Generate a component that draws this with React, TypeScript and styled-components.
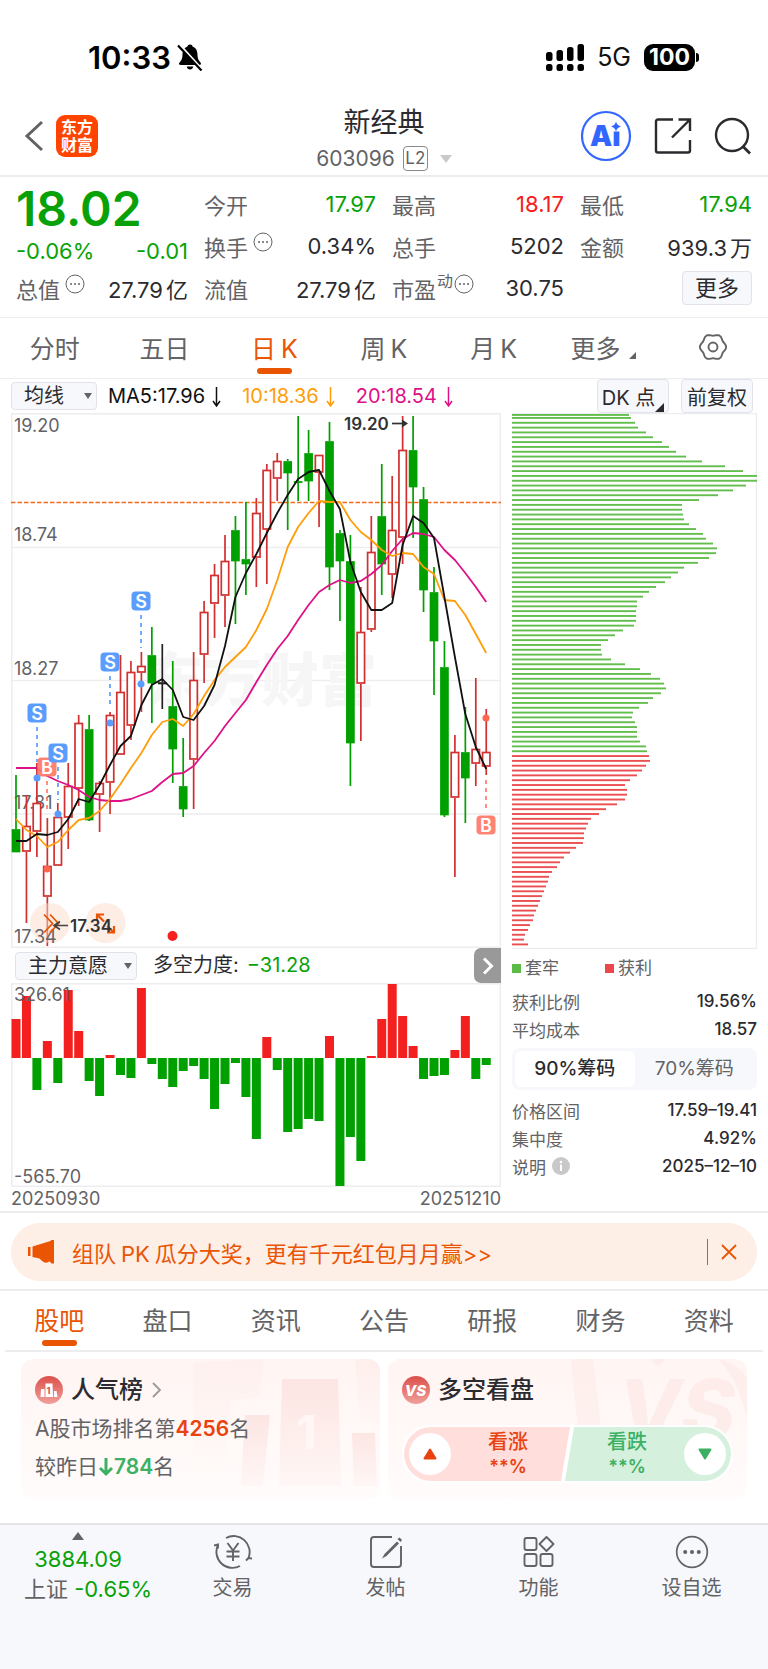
import React, { useState } from "react";
import styled, { createGlobalStyle } from "styled-components";

const color = {
  ink: "#2b2b2f",
  grey: "#636366",
  line: "#ededf0",
  orange: "#ea5504",
  green: "#08a208",
  candleGreen: "#00a000",
  red: "#f42020",
  candleRed: "#d23030",
  soft: "#f7f8fb",
  ma10: "#ff9d0a",
  ma20: "#dd1188",
};

const Global = createGlobalStyle`
  *, *::before, *::after { box-sizing: border-box; }
  body {
    margin: 0;
    background: #fff;
    color: ${color.ink};
    font-family: Inter, "Noto Sans CJK SC", sans-serif;
  }
  button, select { font: inherit; color: inherit; margin: 0; }
  button { padding: 0; border: 0; background: none; cursor: pointer; }
  h1, h2, p, dl, dd { margin: 0; font-weight: 400; }
  svg { display: block; flex: none; }
`;

/* ---------- status bar and title bar ---------- */

const StatusBar = styled.div`
  display: flex;
  align-items: center;
  justify-content: space-between;
  height: 96px;
  padding: 18px 69px 0 88px;
`;
const StatusGroup = styled.div<{ $gap: number }>`
  display: flex;
  align-items: center;
  gap: ${(p) => p.$gap}px;
`;
const Clock = styled.span`
  font-size: 31px;
  font-weight: 600;
  color: #000;
`;
const Network = styled.span`
  font-size: 25px;
  color: #111;
`;
const Battery = styled.span`
  display: flex;
  align-items: center;
  gap: 1px;
  &::after {
    content: "";
    width: 3px;
    height: 9px;
    border-radius: 0 4px 4px 0;
    background: #000;
  }
`;
const BatteryLevel = styled.span`
  width: 51px;
  border-radius: 9px;
  background: #000;
  color: #fff;
  font-size: 23px;
  font-weight: 700;
  line-height: 27px;
  text-align: center;
`;

const TitleBar = styled.header`
  display: grid;
  grid-template-columns: 1fr auto 1fr;
  align-items: center;
  height: 81px;
  padding: 0 16px;
  border-bottom: 2px solid ${color.line};
`;
const TitleLeft = styled.div`
  display: flex;
  align-items: center;
  gap: 12px;
  padding-left: 8px;
`;
const TitleRight = styled.div`
  display: flex;
  align-items: center;
  justify-content: flex-end;
  gap: 22px;
`;
const Brand = styled.button`
  width: 42px;
  height: 42px;
  border-radius: 9px;
  background: #ff4400;
  color: #fff;
  font-size: 16px;
  font-weight: 700;
  line-height: 18px;
`;
const TitleText = styled.div`
  display: flex;
  flex-direction: column;
  align-items: center;
  padding-top: 6px;
`;
const StockName = styled.h1`
  font-size: 27px;
  line-height: 40px;
`;
const StockCode = styled.button`
  display: flex;
  align-items: center;
  gap: 8px;
  color: ${color.grey};
  font-size: 21px;
  line-height: 32px;
`;
const LevelTag = styled.span`
  width: 25px;
  margin-right: 4px;
  border: 1px solid #8a8a8e;
  border-radius: 4px;
  font-size: 17px;
  line-height: 23px;
  text-align: center;
`;
const Triangle = styled.i<{ $size: number; $tone: string; $up?: boolean }>`
  width: 0;
  height: 0;
  border: solid transparent;
  border-width: 0 ${(p) => p.$size}px;
  ${(p) => (p.$up ? "border-bottom" : "border-top")}: ${(p) => p.$size + 2}px solid ${(p) => p.$tone};
`;

/* ---------- quote ---------- */

const Quote = styled.section`
  display: grid;
  grid-template-columns: repeat(4, 1fr);
  column-gap: 16px;
  padding: 6px 16px 8px;
  border-bottom: 1px solid ${color.line};
`;
const QuoteColumn = styled.div``;
const Price = styled.p`
  color: ${color.green};
  font-size: 48px;
  font-weight: 600;
  line-height: 52px;
`;
const Change = styled.p`
  display: flex;
  justify-content: space-between;
  color: ${color.green};
  font-size: 22px;
  line-height: 32px;
`;
const Stat = styled.dl`
  display: flex;
  align-items: center;
  justify-content: space-between;
  height: 42px;
  font-size: 22px;
  white-space: nowrap;
`;
const StatName = styled.dt`
  display: flex;
  align-items: center;
  gap: 5px;
  color: ${color.grey};
  sup { font-size: 16px; line-height: 16px; margin: -14px -4px 0; }
  svg { margin-top: -8px; }
`;
const StatValue = styled.dd<{ $tone?: string }>`
  color: ${(p) => p.$tone ?? color.ink};
`;
const Unit = styled.span`
  margin-left: 3px;
`;
const MoreRow = styled.div`
  display: flex;
  align-items: center;
  justify-content: flex-end;
  height: 42px;
`;
const MoreButton = styled.button`
  width: 70px;
  height: 34px;
  border: 1px solid #e2e3ea;
  border-radius: 4px;
  background: ${color.soft};
  font-size: 22px;
  line-height: 30px;
`;

/* ---------- tabs ---------- */

const Tabs = styled.nav<{ $inset?: boolean }>`
  display: grid;
  grid-template-columns: repeat(7, 1fr);
  height: 61px;
  margin: 0 ${(p) => (p.$inset ? 5 : 0)}px;
  border-bottom: ${(p) => (p.$inset ? 2 : 1)}px solid ${color.line};
`;
const Tab = styled.button<{ $active?: boolean }>`
  position: relative;
  display: flex;
  align-items: center;
  justify-content: center;
  padding-bottom: 3px;
  color: ${(p) => (p.$active ? color.orange : color.grey)};
  font-size: 25px;
  &::after {
    content: "";
    display: ${(p) => (p.$active ? "block" : "none")};
    position: absolute;
    bottom: 4px;
    left: 50%;
    width: 35px;
    height: 6px;
    margin-left: -17px;
    border-radius: 3px;
    background: ${color.orange};
  }
`;
const TabLetter = styled.span`
  margin-left: 5px;
`;
const Latin = styled.span`
  margin: 0 5px;
`;
const Corner = styled.i<{ $size: number; $tone: string }>`
  width: 0;
  height: 0;
  align-self: flex-end;
  border-left: ${(p) => p.$size}px solid transparent;
  border-bottom: ${(p) => p.$size}px solid ${(p) => p.$tone};
`;
const MoreTabCorner = styled(Corner)`
  margin: 0 0 16px 9px;
`;

/* ---------- charts ---------- */

const IndicatorBar = styled.div`
  display: flex;
  align-items: center;
  height: 34px;
  padding: 0 15px 0 11px;
`;
const PickerBox = styled.label`
  position: relative;
  display: flex;
  align-items: center;
`;
const Picker = styled.select<{ $width: number }>`
  appearance: none;
  width: ${(p) => p.$width}px;
  height: 28px;
  padding: 0 0 0 12px;
  border: 1px solid #e2e3ea;
  border-radius: 4px;
  background: ${color.soft};
  font-size: 20px;
  line-height: 26px;
`;
const PickerArrow = styled(Triangle)`
  position: absolute;
  right: 5px;
  pointer-events: none;
`;
const Averages = styled.div`
  display: flex;
  flex: 1;
  gap: 20px;
  padding-left: 11px;
  font-size: 20px;
`;
const Average = styled.span<{ $tone: string }>`
  display: flex;
  align-items: center;
  gap: 6px;
  color: ${(p) => p.$tone};
`;
const ChartButton = styled.button`
  display: flex;
  align-items: center;
  justify-content: center;
  width: 72px;
  height: 34px;
  margin-left: 12px;
  border: 1px solid #e2e3ea;
  border-radius: 4px;
  background: ${color.soft};
  font-size: 20px;
  white-space: nowrap;
`;
const Charts = styled.section`
  display: grid;
  grid-template-columns: 2fr 1fr;
  column-gap: 11px;
  padding: 0 11px;
  border-bottom: 2px solid ${color.line};
`;
const ChartColumn = styled.div`
  min-width: 0;
`;
const Plot = styled.svg`
  width: 100%;
  height: auto;
  font-family: Inter, "Noto Sans CJK SC", sans-serif;
`;
const SubBar = styled.div`
  display: flex;
  align-items: center;
  height: 35px;
  padding-left: 4px;
  font-size: 20px;
`;
const Force = styled.p`
  flex: 1;
  padding-left: 16px;
  line-height: 35px;
  span { margin-left: 8px; color: ${color.green}; }
`;
const NextButton = styled.button`
  display: grid;
  place-items: center;
  width: 27px;
  height: 35px;
  border-radius: 7px 0 0 7px;
  background: #999;
`;
const Dates = styled.p`
  display: flex;
  justify-content: space-between;
  color: ${color.grey};
  font-size: 18px;
  line-height: 24px;
`;
const Legend = styled.p`
  display: flex;
  gap: 46px;
  color: ${color.grey};
  font-size: 17px;
  line-height: 38px;
`;
const LegendItem = styled.span<{ $tone: string }>`
  display: flex;
  align-items: center;
  gap: 4px;
  &::before {
    content: "";
    width: 9px;
    height: 9px;
    background: ${(p) => p.$tone};
  }
`;
const ChipRow = styled.dl`
  display: flex;
  align-items: center;
  justify-content: space-between;
  height: 28px;
  font-size: 17px;
  dt { display: flex; align-items: center; gap: 6px; color: ${color.grey}; }
  dd { font-weight: 500; }
`;
const Segments = styled.div`
  display: flex;
  height: 42px;
  margin: 5px 0 6px;
  padding: 3px;
  border-radius: 8px;
  background: ${color.soft};
`;
const Segment = styled.button<{ $active: boolean }>`
  flex: 1;
  border-radius: 6px;
  background: ${(p) => (p.$active ? "#fff" : "transparent")};
  color: ${(p) => (p.$active ? color.ink : color.grey)};
  font-size: 19px;
  line-height: 34px;
  font-weight: ${(p) => (p.$active ? 500 : 400)};
`;

/* ---------- banner ---------- */

const BannerArea = styled.div`
  padding: 10px 11px 8px;
  border-bottom: 2px solid ${color.line};
`;
const Banner = styled.div`
  display: flex;
  align-items: center;
  height: 58px;
  padding: 0 20px 0 17px;
  border-radius: 29px;
  background: #fdeee6;
  color: ${color.orange};
`;
const BannerLink = styled.a`
  flex: 1;
  margin-left: 18px;
  color: inherit;
  font-size: 22px;
  text-decoration: none;
  white-space: nowrap;
`;
const BannerClose = styled.button`
  display: flex;
  align-items: center;
  height: 26px;
  padding-left: 13px;
  border-left: 1px solid ${color.orange};
`;

/* ---------- cards ---------- */

const Cards = styled.section`
  display: grid;
  grid-template-columns: 1fr 1fr;
  gap: 8px;
  padding: 7px 21px 24px;
`;
const Card = styled.article`
  position: relative;
  overflow: hidden;
  height: 140px;
  padding: 11px 14px;
  border-radius: 12px;
  background: linear-gradient(#fff5f3, #fffcfb);
`;
const CardArt = styled.svg`
  position: absolute;
  top: 0;
  right: 0;
  font-family: Inter, sans-serif;
`;
const CardTitle = styled.h2`
  position: relative;
  display: flex;
  align-items: center;
  gap: 8px;
  font-size: 24px;
  font-weight: 500;
  line-height: 40px;
`;
const RankLine = styled.p`
  position: relative;
  display: flex;
  align-items: center;
  color: ${color.grey};
  font-size: 21px;
  line-height: 38px;
`;
const Strong = styled.b<{ $tone: string }>`
  color: ${(p) => p.$tone};
  font-weight: 600;
`;
const VoteBar = styled.div`
  position: relative;
  display: flex;
  height: 58px;
  margin-top: 15px;
  border: 2px solid #fff;
  border-radius: 29px;
  overflow: hidden;
  background: #fff;
`;
const Vote = styled.button<{ $fall?: boolean }>`
  display: flex;
  flex: 1;
  flex-direction: ${(p) => (p.$fall ? "row-reverse" : "row")};
  align-items: center;
  padding: 0 5px;
  background: ${(p) => (p.$fall ? "#d6f0de" : "#ffdedb")};
  color: ${(p) => (p.$fall ? "#3cb063" : "#e8420f")};
  clip-path: ${(p) =>
    p.$fall ? "polygon(9px 0, 100% 0, 100% 100%, 0 100%)" : "polygon(0 0, 100% 0, calc(100% - 9px) 100%, 0 100%)"};
  margin-left: ${(p) => (p.$fall ? -5 : 0)}px;
`;
const VoteMark = styled.span`
  display: grid;
  place-items: center;
  width: 42px;
  height: 42px;
  border-radius: 50%;
  background: #fff;
`;
const VoteText = styled.span`
  display: flex;
  flex: 1;
  flex-direction: column;
  align-items: center;
  font-size: 20px;
  font-weight: 500;
  line-height: 26px;
  small { font-size: 18px; line-height: 24px; font-weight: 600; }
`;

/* ---------- bottom bar ---------- */

const BottomBar = styled.footer`
  display: grid;
  grid-template-columns: 156fr repeat(4, 153fr);
  align-items: start;
  height: 146px;
  padding-top: 7px;
  border-top: 2px solid #e4e4e9;
  background: ${color.soft};
`;
const BottomItem = styled.button`
  display: flex;
  flex-direction: column;
  align-items: center;
  color: ${color.grey};
  font-size: 20px;
  line-height: 28px;
  svg { margin: 3px 0 5px; }
`;
const IndexItem = styled(BottomItem)`
  font-size: 22px;
  line-height: 30px;
  b { font-weight: 400; color: ${color.green}; }
  i { margin-bottom: 4px; }
`;
const IndexChange = styled.span`
  padding-left: 20px;
`;

/* ---------- data ---------- */

type Kind = "up" | "down" | "flat";
// kind, high, body top, body bottom, low (plot units)
const candles: [Kind, number, number, number, number][] = [
  ["down", 775, 829, 852, 852], ["up", 795, 826, 852, 923], ["up", 763, 803, 832, 857], ["up", 818, 866, 897, 946],
  ["up", 803, 817, 866, 866], ["up", 763, 786, 818, 849], ["up", 715, 723, 789, 806], ["down", 715, 729, 820, 821],
  ["up", 781, 783, 795, 832], ["up", 712, 715, 783, 814], ["up", 655, 692, 755, 755], ["up", 661, 672, 726, 740],
  ["up", 652, 666, 673, 712], ["down", 627, 655, 683, 723], ["flat", 644, 682, 684, 709], ["down", 661, 706, 749, 783],
  ["down", 738, 786, 809, 817], ["up", 652, 680, 760, 809], ["up", 601, 612, 655, 683], ["up", 564, 575, 604, 638],
  ["up", 535, 561, 596, 627], ["down", 516, 530, 561, 624], ["down", 502, 559, 564, 595], ["up", 498, 513, 558, 587],
  ["up", 464, 470, 530, 584], ["up", 453, 461, 479, 501], ["down", 459, 461, 473, 530], ["down", 416, 481, 482, 501],
  ["down", 430, 453, 481, 501], ["up", 455, 455, 473, 527], ["down", 422, 441, 567, 590], ["down", 530, 533, 561, 621],
  ["down", 535, 561, 743, 786], ["up", 587, 632, 684, 741], ["up", 516, 552, 630, 632], ["down", 464, 516, 564, 595],
  ["up", 476, 530, 575, 598], ["up", 416, 450, 538, 564], ["down", 416, 450, 487, 538], ["down", 487, 499, 590, 612],
  ["down", 567, 592, 641, 695], ["down", 641, 667, 815, 817], ["up", 735, 752, 798, 877], ["down", 707, 752, 778, 823],
  ["up", 678, 749, 764, 786], ["up", 709, 752, 767, 775],
];
const ma5 = [841, 841, 834, 835, 832, 819, 799, 802, 785, 765, 746, 736, 705, 685, 679, 690, 717, 720, 706, 685, 646, 597, 573, 554, 533, 513, 495, 479, 472, 470, 491, 509, 562, 592, 610, 610, 603, 545, 516, 523, 538, 597, 657, 714, 747, 769];
const ma10 = [819, 830, 836, 847, 842, 830, 820, 818, 811, 799, 784, 768, 753, 735, 722, 719, 726, 714, 696, 680, 667, 657, 647, 630, 609, 580, 547, 527, 513, 501, 502, 502, 520, 532, 540, 550, 556, 553, 554, 567, 574, 600, 601, 615, 634, 653];
const ma20 = [768, 768, 768, 776, 781, 785, 790, 797, 800, 801, 801, 799, 795, 791, 782, 774, 773, 766, 753, 741, 726, 713, 700, 682, 665, 649, 636, 620, 605, 592, 585, 580, 583, 581, 574, 565, 551, 539, 533, 534, 537, 550, 560, 573, 587, 602];
const force = [39, 62, -32, 17, -25, 68, 27, -23, -38, 3, -17, -20, 70, -6, -21, -29, -13, -8, -21, -51, -26, -5, -39, -81, 21, -12, -74, -71, -61, -63, 22, -128, -79, -103, 2, 39, 74, 42, 12, -21, -18, -17, 8, 42, -21, -7];
const trapped = [117, 119, 123, 126, 134, 141, 150, 157, 164, 174, 190, 213, 231, 245, 245, 234, 221, 206, 187, 170, 170, 171, 172, 177, 184, 191, 194, 201, 205, 204, 197, 186, 172, 166, 159, 153, 144, 137, 131, 125, 125, 124, 124, 124, 122, 111, 103, 96, 89, 89, 90, 99, 113, 128, 139, 148, 152, 154, 149, 141, 136, 127, 121, 120, 123, 125, 125, 125, 128, 134, 135];
const profit = [137, 138, 134, 130, 125, 118, 113, 115, 115, 113, 105, 94, 87, 79, 76, 74, 72, 72, 71, 64, 58, 52, 48, 45, 40, 37, 36, 34, 32, 30, 28, 26, 24, 22, 21, 18, 16, 13, 12, 16];

const xOf = (i: number) => 16 + i * 10.45;
const toLine = (ys: number[]) => ys.map((y, i) => `${xOf(i).toFixed(1)},${y}`).join(" ");
const candleTone: Record<Kind, string> = { up: color.candleRed, down: color.candleGreen, flat: "#222" };

function CandleChart() {
  const sells = [
    { x: 37, y: 713, from: 727, to: 762, dot: 778 },
    { x: 58, y: 753, from: 767, to: 800, dot: 814 },
    { x: 110, y: 662, from: 676, to: 708, dot: 723 },
    { x: 141, y: 601, from: 615, to: 648, dot: 684 },
  ];
  const buys = [
    { x: 47, y: 767, from: 781, to: 813, dot: 869 },
    { x: 486, y: 825, from: 780, to: 812, dot: 718 },
  ];
  return (
    <Plot viewBox="11 413 490 535" role="img" aria-label="日K">
      <g stroke={color.line} strokeWidth="1.500" fill="none">
        <rect x="11.800" y="413.800" width="488.500" height="533.500" />
        <path d="M11 547.500H501M11 680.500H501M11 814H501" />
      </g>
      <text x="145" y="701" fontSize="58" fontWeight="900" fill="#f6f6f7">东方财富</text>
      <path d="M11 502.500H501" stroke="#f26a1b" strokeWidth="1.500" strokeDasharray="4.500 2" />
      <g fontSize="18" fill={color.grey}>
        <text x="14" y="432">19.20</text>
        <text x="14" y="541">18.74</text>
        <text x="14" y="675">18.27</text>
        <text x="14" y="809">17.81</text>
      </g>
      {candles.map(([kind, high, top, bottom, low], i) => (
        <g key={i} stroke={candleTone[kind]} strokeWidth="1.700">
          <path d={`M${xOf(i)} ${high}V${top}M${xOf(i)} ${bottom}V${low}`} />
          <rect
            x={xOf(i) - (kind === "up" ? 3.7 : 3.5)}
            y={top + (kind === "up" ? 0.5 : 1)}
            width={kind === "up" ? 7.4 : 7}
            height={Math.max(bottom - top - 1.5, 0.1)}
            fill={kind === "down" ? color.candleGreen : kind === "up" ? "#fff" : "#222"}
          />
        </g>
      ))}
      <g fill="none" strokeWidth="1.800" strokeLinejoin="round">
        <polyline points={toLine(ma20)} stroke={color.ma20} />
        <polyline points={toLine(ma10)} stroke={color.ma10} />
        <polyline points={toLine(ma5)} stroke="#111" />
      </g>
      <g fontSize="18" textAnchor="middle" fontWeight="600">
        {buys.map((m) => (
          <g key={m.x}>
            <path d={`M${m.x} ${m.from}V${m.to}`} stroke="#ff7b6b" strokeWidth="1.700" strokeDasharray="4 4" />
            <circle cx={m.x} cy={m.dot} r="3.500" fill="#ff6650" />
            <rect x={m.x - 9.5} y={m.y - 9.5} width="19" height="19" rx="4" fill="#ff7b6b" opacity=".95" />
            <text x={m.x} y={m.y + 6.5} fill="#fff">B</text>
          </g>
        ))}
        {sells.map((m) => (
          <g key={m.x}>
            <path d={`M${m.x} ${m.from}V${m.to}`} stroke="#5a9dff" strokeWidth="1.700" strokeDasharray="4 4" />
            <circle cx={m.x} cy={m.dot} r="3.500" fill="#5a9dff" />
            <rect x={m.x - 9.5} y={m.y - 9.5} width="19" height="19" rx="4" fill="#5a9dff" />
            <text x={m.x} y={m.y + 6.5} fill="#fff">S</text>
          </g>
        ))}
      </g>
      <text x="344" y="430" fontSize="17" fontWeight="600" fill="#333">19.20</text>
      <path d="M392 423.500H406" stroke="#333" strokeWidth="1.700" />
      <path d="M402 419.500L408 423.500L402 427.500Z" fill="#333" />
      <circle cx="50" cy="923" r="20" fill="#fcdccb" opacity=".5" />
      <circle cx="105.500" cy="923" r="20" fill="#fcdccb" opacity=".5" />
      <text x="14" y="943" fontSize="18" fill={color.grey}>17.34</text>
      <g fill="none" stroke={color.orange} strokeWidth="1.800">
        <path d="M44 914.500L52.500 923.500L44 932.500M50 914.500L58.500 923.500L50 932.500" />
        <path d="M97 921V914.500H104M97 914.500L104 921.500" strokeWidth="2.200" />
        <path d="M107 932.500H114V926M114 932.500L107 926" strokeWidth="2.200" />
      </g>
      <path d="M55 925.500H68M60 921.500L54 925.500L60 929.500" stroke="#444" strokeWidth="1.700" fill="none" />
      <text x="70" y="932" fontSize="17" fontWeight="600" fill="#333">17.34</text>
      <circle cx="172.500" cy="936" r="5" fill={color.red} />
    </Plot>
  );
}

function ForceChart() {
  return (
    <Plot viewBox="11 983 490 204" role="img" aria-label="多空力度">
      <rect x="11.800" y="983.800" width="488.500" height="202.500" fill="none" stroke={color.line} strokeWidth="1.500" />
      {force.map((v, i) => (
        <rect
          key={i}
          x={xOf(i) - 4.5}
          y={v > 0 ? 1058 - v : 1058}
          width="9"
          height={Math.abs(v)}
          fill={v > 0 ? color.red : color.candleGreen}
        />
      ))}
      <g fontSize="18" fill={color.grey}>
        <text x="14" y="1001">326.61</text>
        <text x="14" y="1183">-565.70</text>
      </g>
    </Plot>
  );
}

function ChipChart() {
  const bars = [...trapped, ...profit];
  return (
    <Plot viewBox="512 413 245 536" role="img" aria-label="筹码分布">
      <path d="M512 413.500H756.500V948.500H512" fill="none" stroke={color.line} strokeWidth="1.500" />
      {bars.map((w, i) => (
        <rect
          key={i}
          x="512"
          y={i === 0 ? 414 : 417 + (i - 1) * 4.83}
          width={w}
          height="1.900"
          fill={i < trapped.length ? "#63be4e" : "#ec4f52"}
        />
      ))}
    </Plot>
  );
}

/* ---------- icons ---------- */

const Dots = ({ size, r }: { size: number; r: number }) => (
  <svg width={size} height={size} viewBox="0 0 20 20" fill="none" stroke="currentColor" strokeWidth="1">
    <circle cx="10" cy="10" r="9" />
    <g fill="currentColor" stroke="none">
      <circle cx="6" cy="10" r={r} />
      <circle cx="10" cy="10" r={r} />
      <circle cx="14" cy="10" r={r} />
    </g>
  </svg>
);

const MutedBell = () => (
  <svg width="26" height="28" viewBox="0 0 26 28">
    <path d="M13 1.500a2.800 2.800 0 0 1 2.800 2.300c3.500 1.200 4.600 4.200 4.700 8.200.1 4 1.200 5.600 3 7.400.9 1 .5 2.600-1.300 2.600H3.800c-1.800 0-2.200-1.600-1.300-2.600 1.800-1.800 2.900-3.400 3-7.400.1-4 1.200-7 4.700-8.200A2.800 2.800 0 0 1 13 1.500ZM9.800 23.500h6.400c-.2 1.900-1.500 3-3.200 3s-3-1.100-3.200-3Z" />
    <path d="M3 2L26 27.500" stroke="#fff" strokeWidth="2.400" />
    <path d="M1 2.500L24.500 27.500" stroke="#000" strokeWidth="2.200" />
  </svg>
);

const Signal = () => (
  <svg width="38" height="27" viewBox="0 0 38 27">
    {[8, 6, 3, 0].map((top, i) => (
      <g key={i}>
        <rect x={i * 10.5} y={top} width="6.500" height={17 - top} rx="2.500" />
        <rect x={i * 10.5} y="20" width="6.500" height="7" rx="2.500" />
      </g>
    ))}
  </svg>
);

const gearOutline = Array.from({ length: 72 }, (_, i) => {
  const a = (i * Math.PI) / 36;
  const r = 12.2 + 0.9 * Math.cos(6 * a);
  return `${(15 + r * Math.cos(a)).toFixed(2)},${(15 + r * Math.sin(a)).toFixed(2)}`;
}).join(" ");

const Gear = () => (
  <svg width="30" height="30" viewBox="0 0 30 30" fill="none" stroke="currentColor" strokeWidth="1.900">
    <polygon points={gearOutline} strokeLinejoin="round" />
    <circle cx="15" cy="15" r="4.500" />
  </svg>
);

const DownArrow = () => (
  <svg width="11" height="21" viewBox="0 0 11 21" fill="none" stroke="currentColor" strokeWidth="1.500">
    <path d="M5.500 1V20M2 15L5.500 20L9 15" />
  </svg>
);

export default function App() {
  const [range, setRange] = useState(90);
  const chartTabs = ["分时", "五日", "日K", "周K", "月K"];
  const infoTabs = ["股吧", "盘口", "资讯", "公告", "研报", "财务", "资料"];

  return (
    <>
      <Global />
      <StatusBar>
        <StatusGroup $gap={6}>
          <Clock>10:33</Clock>
          <MutedBell />
        </StatusGroup>
        <StatusGroup $gap={13}>
          <Signal />
          <Network>5G</Network>
          <Battery>
            <BatteryLevel>100</BatteryLevel>
          </Battery>
        </StatusGroup>
      </StatusBar>

      <TitleBar>
        <TitleLeft>
          <button aria-label="返回">
            <svg width="20" height="32" viewBox="0 0 20 32" fill="none" stroke={color.grey} strokeWidth="3">
              <path d="M18 2L3 16L18 30" />
            </svg>
          </button>
          <Brand>东方<br />财富</Brand>
        </TitleLeft>
        <TitleText>
          <StockName>新经典</StockName>
          <StockCode>
            603096
            <LevelTag>L2</LevelTag>
            <Triangle $size={6} $tone="#c9c9cc" />
          </StockCode>
        </TitleText>
        <TitleRight>
          <button aria-label="Ai">
            <svg width="52" height="52" viewBox="0 0 52 52">
              <circle cx="26" cy="26" r="24" fill="none" stroke="#3366ff" strokeWidth="2.200" />
              <text x="10" y="36" fontSize="28" fontWeight="900" fontFamily="Inter" fill="#3366ff">Ai</text>
              <path d="M29 11H42V21.500H29Z" fill="#fff" />
              <path d="M36 11.500Q37 15.500 41 16.500Q37 17.500 36 21.500Q35 17.500 31 16.500Q35 15.500 36 11.500Z" fill="#3366ff" />
            </svg>
          </button>
          <button aria-label="分享">
            <svg width="38" height="38" viewBox="0 0 38 38" fill="none" stroke={color.ink} strokeWidth="2.400">
              <path d="M19 2.500H4Q2 2.500 2 4.500V33.500Q2 35.500 4 35.500H34Q36 35.500 36 33.500V23" />
              <path d="M24.500 2.500H36V14M36 2.500L18 20.500" />
            </svg>
          </button>
          <button aria-label="搜索">
            <svg width="38" height="38" viewBox="0 0 38 38" fill="none" stroke={color.ink} strokeWidth="2.400">
              <circle cx="18" cy="18" r="16" />
              <path d="M28.500 29L36 36.500" strokeWidth="2.800" />
            </svg>
          </button>
        </TitleRight>
      </TitleBar>

      <Quote>
        <QuoteColumn>
          <Price>18.02</Price>
          <Change>
            <span>-0.06%</span>
            <span>-0.01</span>
          </Change>
          <Stat>
            <StatName>总值<Dots size={20} r={1} /></StatName>
            <StatValue>27.79<Unit>亿</Unit></StatValue>
          </Stat>
        </QuoteColumn>
        <QuoteColumn>
          <Stat><StatName>今开</StatName><StatValue $tone={color.green}>17.97</StatValue></Stat>
          <Stat><StatName>换手<Dots size={20} r={1} /></StatName><StatValue>0.34%</StatValue></Stat>
          <Stat><StatName>流值</StatName><StatValue>27.79<Unit>亿</Unit></StatValue></Stat>
        </QuoteColumn>
        <QuoteColumn>
          <Stat><StatName>最高</StatName><StatValue $tone={color.red}>18.17</StatValue></Stat>
          <Stat><StatName>总手</StatName><StatValue>5202</StatValue></Stat>
          <Stat><StatName>市盈<sup>动</sup><Dots size={20} r={1} /></StatName><StatValue>30.75</StatValue></Stat>
        </QuoteColumn>
        <QuoteColumn>
          <Stat><StatName>最低</StatName><StatValue $tone={color.green}>17.94</StatValue></Stat>
          <Stat><StatName>金额</StatName><StatValue>939.3<Unit>万</Unit></StatValue></Stat>
          <MoreRow><MoreButton>更多</MoreButton></MoreRow>
        </QuoteColumn>
      </Quote>

      <Tabs>
        {chartTabs.map((name) => (
          <Tab key={name} $active={name === "日K"}>
            <span>{name.endsWith("K") ? <>{name[0]}<TabLetter>K</TabLetter></> : name}</span>
          </Tab>
        ))}
        <Tab>更多<MoreTabCorner $size={7} $tone={color.grey} /></Tab>
        <Tab aria-label="设置"><Gear /></Tab>
      </Tabs>

      <IndicatorBar>
        <PickerBox>
          <Picker $width={86} aria-label="均线" defaultValue="均线"><option>均线</option></Picker>
          <PickerArrow $size={4} $tone={color.grey} />
        </PickerBox>
        <Averages>
          <Average $tone="#111">MA5:17.96<DownArrow /></Average>
          <Average $tone={color.ma10}>10:18.36<DownArrow /></Average>
          <Average $tone={color.ma20}>20:18.54<DownArrow /></Average>
        </Averages>
        <ChartButton>DK 点<Corner $size={9} $tone={color.ink} /></ChartButton>
        <ChartButton>前复权</ChartButton>
      </IndicatorBar>

      <Charts>
        <ChartColumn>
          <CandleChart />
          <SubBar>
            <PickerBox>
              <Picker $width={122} aria-label="主力意愿" defaultValue="主力意愿"><option>主力意愿</option></Picker>
              <PickerArrow $size={4} $tone={color.grey} />
            </PickerBox>
            <Force>多空力度:<span>−31.28</span></Force>
            <NextButton aria-label="下一个">
              <svg width="12" height="20" viewBox="0 0 12 20" fill="none" stroke="#fff" strokeWidth="3">
                <path d="M2 2.500L9.500 10L2 17.500" />
              </svg>
            </NextButton>
          </SubBar>
          <ForceChart />
          <Dates><span>20250930</span><span>20251210</span></Dates>
        </ChartColumn>
        <ChartColumn>
          <ChipChart />
          <Legend>
            <LegendItem $tone="#5cbb46">套牢</LegendItem>
            <LegendItem $tone="#ec474b">获利</LegendItem>
          </Legend>
          <ChipRow><dt>获利比例</dt><dd>19.56%</dd></ChipRow>
          <ChipRow><dt>平均成本</dt><dd>18.57</dd></ChipRow>
          <Segments>
            {[90, 70].map((n) => (
              <Segment key={n} $active={range === n} onClick={() => setRange(n)}>{n}%筹码</Segment>
            ))}
          </Segments>
          <ChipRow><dt>价格区间</dt><dd>17.59–19.41</dd></ChipRow>
          <ChipRow><dt>集中度</dt><dd>4.92%</dd></ChipRow>
          <ChipRow>
            <dt>
              说明
              <svg width="18" height="18" viewBox="0 0 18 18">
                <circle cx="9" cy="9" r="9" fill="#c8c8ca" />
                <circle cx="9" cy="5" r="1.300" fill="#fff" />
                <path d="M9 7.500V14" stroke="#fff" strokeWidth="2" />
              </svg>
            </dt>
            <dd>2025–12–10</dd>
          </ChipRow>
        </ChartColumn>
      </Charts>

      <BannerArea>
        <Banner>
          <svg width="26" height="24" viewBox="0 0 26 24" fill="currentColor">
            <path d="M0 7H2.500V16H0ZM4.500 6.500L22.500 1Q22.500 0 24 0H26V23.500H24Q22.500 23.500 22.500 22L21 21.500Q18 24.500 13.500 20.500L11.500 18.500L4.500 17Z" />
          </svg>
          <BannerLink href="#pk">组队<Latin>PK</Latin>瓜分大奖，更有千元红包月月赢&gt;&gt;</BannerLink>
          <BannerClose aria-label="关闭">
            <svg width="16" height="16" viewBox="0 0 16 16" fill="none" stroke="currentColor" strokeWidth="1.800">
              <path d="M1 1L15 15M15 1L1 15" />
            </svg>
          </BannerClose>
        </Banner>
      </BannerArea>

      <Tabs $inset>
        {infoTabs.map((name, i) => (
          <Tab key={name} $active={i === 0}>{name}</Tab>
        ))}
      </Tabs>

      <Cards>
        <Card>
          <CardArt width="359" height="140" viewBox="0 0 359 140">
            <defs>
              <linearGradient id="fade" x1="0" y1="0" x2="0" y2="1">
                <stop offset="0" stopColor="#fbdedb" stopOpacity=".7" />
                <stop offset="1" stopColor="#fbdedb" stopOpacity=".15" />
              </linearGradient>
            </defs>
            <g fill="url(#fade)">
              <path d="M172 4L243 0L238 38L210 42L203 112H172Z" opacity=".3" />
              <path d="M334 0H359V64H339Z" opacity=".4" />
              <path d="M261 20H317L320 127H258Z" />
              <path d="M224 56H249L242 127H220Z" />
              <path d="M331 74H354L356 127H333Z" />
            </g>
            <text x="275" y="90" fontSize="47" fontWeight="800" fill="#fff6f5">1</text>
          </CardArt>
          <CardTitle>
            <svg width="28" height="28" viewBox="0 0 28 28">
              <defs>
                <linearGradient id="badge" x1="0" y1="0" x2="0" y2="1">
                  <stop offset="0" stopColor="#dc4f4b" />
                  <stop offset="1" stopColor="#f0a09b" />
                </linearGradient>
              </defs>
              <circle cx="14" cy="14" r="14" fill="url(#badge)" />
              <path d="M6 13H9.500V21H5.500ZM10.500 7.500H17.500L18 21H10.500ZM19 15H21.500L22.500 21H19Z" fill="#fff" />
              <text x="11.500" y="17.500" fontSize="9" fontWeight="800" fontFamily="Inter" fill="#dc5a56">1</text>
            </svg>
            人气榜
            <svg width="12" height="16" viewBox="0 0 12 16" fill="none" stroke="#999" strokeWidth="1.800">
              <path d="M2 1L9 8L2 15" />
            </svg>
          </CardTitle>
          <RankLine>A股市场排名第<Strong $tone="#e8420f">4256</Strong>名</RankLine>
          <RankLine>
            较昨日
            <svg width="16" height="20" viewBox="0 0 16 20" fill="none" stroke="#3cb063" strokeWidth="3">
              <path d="M8 1V17M2 11L8 17L14 11" />
            </svg>
            <Strong $tone="#3cb063">784</Strong>名
          </RankLine>
        </Card>
        <Card>
          <CardArt width="359" height="140" viewBox="0 0 359 140" fill="#fbe3e0">
            <path d="M183 0H205L213 70H190Z" opacity=".35" />
            <path d="M262 0H278L270 8ZM330 0Q350 4 359 20V60Q350 20 330 0Z" opacity=".4" />
            <text x="230" y="80" fontSize="82" fontWeight="800" fontStyle="italic" opacity=".55">VS</text>
          </CardArt>
          <CardTitle>
            <svg width="28" height="28" viewBox="0 0 28 28">
              <circle cx="14" cy="14" r="14" fill="url(#badge)" />
              <text x="13.500" y="19.500" fontSize="15" fontWeight="800" fontStyle="italic" fontFamily="Inter" textAnchor="middle" fill="#fff">VS</text>
            </svg>
            多空看盘
          </CardTitle>
          <VoteBar>
            <Vote>
              <VoteMark>
                <svg width="14" height="12" viewBox="0 0 14 12"><path d="M7 1.500L12.500 10.500H1.500Z" fill="#e8420f" stroke="#e8420f" strokeWidth="2" strokeLinejoin="round" /></svg>
              </VoteMark>
              <VoteText>看涨<small>**%</small></VoteText>
            </Vote>
            <Vote $fall>
              <VoteMark>
                <svg width="14" height="12" viewBox="0 0 14 12"><path d="M7 10.500L12.500 1.500H1.500Z" fill="#3cb063" stroke="#3cb063" strokeWidth="2" strokeLinejoin="round" /></svg>
              </VoteMark>
              <VoteText>看跌<small>**%</small></VoteText>
            </Vote>
          </VoteBar>
        </Card>
      </Cards>

      <BottomBar>
        <IndexItem>
          <Triangle $size={6} $tone={color.grey} $up />
          <b>3884.09</b>
          <IndexChange>上证 <b>-0.65%</b></IndexChange>
        </IndexItem>
        <BottomItem>
          <svg width="38" height="34" viewBox="0 0 38 34" fill="none" stroke="currentColor" strokeWidth="1.900">
            <path d="M12 3A16 16 0 0 1 34.500 23M26 31A16 16 0 0 1 4 10" />
            <path d="M32 25.500L34.500 23L38 23.500M0 10.500L4 9.500V13.500" />
            <path d="M13.500 8L19 15.500L24.500 8M19 15.500V26M12.500 16.500H25.500M12.500 21.500H25.500" />
          </svg>
          交易
        </BottomItem>
        <BottomItem>
          <svg width="34" height="34" viewBox="0 0 34 34" fill="none" stroke="currentColor" strokeWidth="1.900">
            <path d="M23 2H5Q2 2 2 5V29Q2 32 5 32H29Q32 32 32 29V11" />
            <path d="M28 6.500L15.500 19L13 23.500L17.500 21L30 8.500Z" fill="currentColor" stroke="none" />
            <path d="M30.500 2.500L33 5L31.500 7L28.500 4Z" fill="currentColor" stroke="none" />
          </svg>
          发帖
        </BottomItem>
        <BottomItem>
          <svg width="34" height="34" viewBox="0 0 34 34" fill="none" stroke="currentColor" strokeWidth="1.900" strokeLinejoin="round">
            <rect x="2.500" y="3" width="12" height="12" rx="2" />
            <rect x="2.500" y="19" width="12" height="12" rx="2" />
            <rect x="18.500" y="19" width="12" height="12" rx="2" />
            <path d="M24.500 2L31.500 9L24.500 16L17.500 9Z" />
          </svg>
          功能
        </BottomItem>
        <BottomItem>
          <Dots size={34} r={1.2} />
          设自选
        </BottomItem>
      </BottomBar>
    </>
  );
}
